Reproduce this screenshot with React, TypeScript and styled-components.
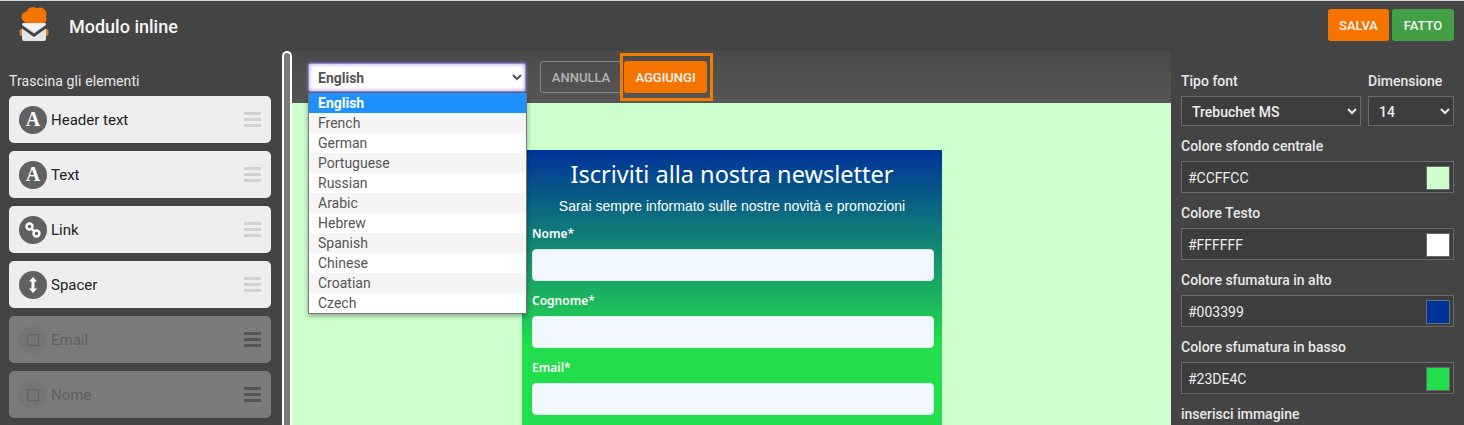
import React from 'react';
import styled, { createGlobalStyle } from 'styled-components';
import { FaRegSquare } from 'react-icons/fa';

const GlobalStyle = createGlobalStyle`
  html, body {
    margin: 0;
    height: 100%;
    overflow: hidden;
    background: #444444;
    font-family: Roboto, "Liberation Sans", sans-serif;
  }
  * {
    box-sizing: border-box;
  }
`;

const Page = styled.div`
  width: 1464px;
  height: 425px;
  overflow: hidden;
  display: flex;
  flex-direction: column;
  background: #444444;
  border-top: 1px solid #d8d8d8;
`;

const Header = styled.header`
  height: 50px;
  flex: none;
  display: flex;
  align-items: center;
  padding: 0 10px 0 19px;
`;

const Logo = styled.svg`
  width: 30px;
  height: 36px;
  margin-top: -6px;
`;

const Title = styled.h1`
  margin: 0 0 0 20px;
  font-size: 18px;
  font-weight: 500;
  color: #f5f5f5;
  flex: 1;
`;

const HeaderButton = styled.button<{ $bg: string; $w: number }>`
  width: ${p => p.$w}px;
  height: 32px;
  margin: -2px 0 0 3px;
  padding: 0;
  border: 0;
  border-radius: 3px;
  background: ${p => p.$bg};
  color: #f4f4f4;
  font: 500 13px Roboto, sans-serif;
`;

const Body = styled.div`
  flex: 1;
  display: flex;
  min-height: 0;
`;

const Sidebar = styled.aside`
  width: 282px;
  flex: none;
  padding: 21px 10px 0 9px;
`;

const SideTitle = styled.div`
  font-size: 14px;
  letter-spacing: 0.1px;
  line-height: 18px;
  color: #e8e8e8;
  margin-bottom: 6px;
`;

const ItemList = styled.div`
  display: flex;
  flex-direction: column;
  gap: 8px;
`;

const Item = styled.div<{ $off?: boolean }>`
  height: 47px;
  width: 262px;
  display: flex;
  align-items: center;
  padding: 0 10px;
  border-radius: 5px;
  background: ${p => (p.$off ? '#7b7b7b' : '#eeeeee')};
  color: ${p => (p.$off ? '#5f5f5f' : '#222222')};
  font-size: 15px;
`;

const ItemIcon = styled.span<{ $off?: boolean }>`
  width: 28px;
  height: 28px;
  border-radius: 50%;
  flex: none;
  margin-right: 4px;
  display: flex;
  align-items: center;
  justify-content: center;
  background: ${p => (p.$off ? '#757575' : '#616161')};
  color: ${p => (p.$off ? '#636363' : '#ffffff')};
  font: bold 20px "Liberation Serif", serif;
`;

const ItemLabel = styled.span`
  flex: 1;
`;

const Handle = styled.span<{ $off?: boolean }>`
  width: 17px;
  height: 15px;
  flex: none;
  display: flex;
  flex-direction: column;
  justify-content: space-between;
  & > i {
    display: block;
    height: 3px;
    background: ${p => (p.$off ? '#565656' : '#d2d2d2')};
  }
`;

const ScrollThumb = styled.div`
  width: 10px;
  flex: none;
  border: 2px solid #ffffff;
  border-bottom: 0;
  border-radius: 5px 5px 0 0;
  background: #7b7b7b;
`;

const Center = styled.main`
  flex: 1;
  min-width: 0;
  display: flex;
  flex-direction: column;
`;

const Toolbar = styled.div`
  position: relative;
  height: 52px;
  flex: none;
  display: flex;
  align-items: flex-start;
  padding: 2px 0 0 16px;
  background: linear-gradient(#4a4a4a, #565656);
`;

const LangSelect = styled.select`
  width: 218px;
  height: 29px;
  margin-top: 10px;
  padding: 0 5px;
  border: 1px solid #8f88c8;
  border-radius: 3px;
  box-shadow: inset 0 0 4px #a99cf0, 0 0 3px #8f7fe0;
  outline: none;
  background: #ffffff;
  color: #555555;
  font: 700 14px Roboto, sans-serif;
`;

const Dropdown = styled.ul`
  position: absolute;
  left: 16px;
  top: 42px;
  z-index: 5;
  width: 219px;
  margin: 0;
  padding: 0;
  list-style: none;
  background: #ffffff;
  border: 1px solid #777777;
  border-top: 0;
  box-shadow: 0 2px 5px rgba(0, 0, 0, 0.35);
`;

const Option = styled.li<{ $active?: boolean }>`
  height: 20px;
  line-height: 20px;
  padding-left: 9px;
  font-size: 14px;
  font-weight: ${p => (p.$active ? 700 : 400)};
  color: ${p => (p.$active ? '#ffffff' : '#555555')};
  background: ${p => (p.$active ? '#1e90ff' : 'transparent')};
  &:nth-child(even) {
    background: #f5f5f5;
  }
`;

const CancelButton = styled.button`
  width: 82px;
  height: 32px;
  margin: 8px 0 0 14px;
  padding: 0;
  border: 1px solid #8a8a8a;
  border-radius: 3px;
  background: transparent;
  color: #b4b4b4;
  font: 500 13px Roboto, sans-serif;
`;

const AddFrame = styled.div`
  width: 93px;
  height: 48px;
  margin-left: -2px;
  padding: 5px 3px 0 1px;
  border: 3px solid #f57c00;
`;

const AddButton = styled.button`
  width: 83px;
  height: 32px;
  padding: 0;
  border: 0;
  border-radius: 3px;
  background: #f57400;
  color: #f5f5f5;
  font: 500 13px Roboto, sans-serif;
`;

const Canvas = styled.div`
  flex: 1;
  min-height: 0;
  overflow: hidden;
  padding: 47px 0 0 230px;
  background: #ccffcc;
`;

const Form = styled.div`
  width: 420px;
  height: 400px;
  padding: 0 10px;
  background: linear-gradient(#003399 0, #23de4c 195px);
  color: #ffffff;
`;

const FormTitle = styled.h2`
  margin: 0;
  padding-top: 9px;
  text-align: center;
  font: 400 23.5px/30px "Noto Sans", sans-serif;
`;

const FormSub = styled.p`
  margin: 9px 0 0;
  text-align: center;
  font: 14px/16px "Liberation Sans", sans-serif;
`;

const FieldLabel = styled.label`
  display: block;
  margin: 11px 0 6px;
  font: 600 12px/18px "Noto Sans", sans-serif;
`;

const FieldInput = styled.input`
  display: block;
  width: 402px;
  height: 32px;
  border: 1px solid #dfe6ec;
  border-radius: 4px;
  background: #f0f7fe;
  outline: none;
`;

const Panel = styled.aside`
  width: 293px;
  flex: none;
  padding: 21px 10px 0;
  color: #e8e8e8;
  font-size: 14px;
`;

const FontRow = styled.div`
  display: grid;
  grid-template-columns: 180px 86px;
  column-gap: 7px;
`;

const PanelLabel = styled.div`
  line-height: 18px;
  margin-bottom: 6px;
  font-weight: 500;
`;

const PanelSelect = styled.select`
  width: 100%;
  height: 30px;
  padding: 2px 6px 0;
  border: 1px solid #6a6a6a;
  background: #3d3d3d;
  color: #eeeeee;
  font: 500 14px Roboto, sans-serif;
  outline: none;
`;

const ColorBlock = styled.div`
  margin-top: 11px;
`;

const ColorField = styled.div`
  width: 273px;
  height: 32px;
  display: flex;
  align-items: center;
  justify-content: space-between;
  padding: 1px 3px 0 6px;
  border: 1px solid #6a6a6a;
  background: #3d3d3d;
  color: #eeeeee;
`;

const Swatch = styled.span<{ $color: string }>`
  width: 24px;
  height: 24px;
  border: 1px solid #6a6a6a;
  background: ${p => p.$color};
`;

const languages = ['English', 'French', 'German', 'Portuguese', 'Russian', 'Arabic', 'Hebrew', 'Spanish', 'Chinese', 'Croatian', 'Czech'];

const colors = [
  { label: 'Colore sfondo centrale', value: '#CCFFCC' },
  { label: 'Colore Testo', value: '#FFFFFF' },
  { label: 'Colore sfumatura in alto', value: '#003399' },
  { label: 'Colore sfumatura in basso', value: '#23DE4C' },
];

const ChainIcon = () => (
  <svg width="18" height="18" viewBox="0 0 18 18" fill="none" stroke="#ffffff" strokeWidth="2.4">
    <circle cx="5.5" cy="5.5" r="3" />
    <circle cx="12.5" cy="12.5" r="3" />
    <path d="M7.5 7.5 L10.5 10.5" />
  </svg>
);

const SpacerIcon = () => (
  <svg width="10" height="16" viewBox="0 0 10 16" fill="#ffffff">
    <path d="M5 0 L9 4.5 H6.5 V11.5 H9 L5 16 L1 11.5 H3.5 V4.5 H1 Z" />
  </svg>
);

const items = [
  { label: 'Header text', icon: 'A' as React.ReactNode },
  { label: 'Text', icon: 'A' as React.ReactNode },
  { label: 'Link', icon: <ChainIcon /> },
  { label: 'Spacer', icon: <SpacerIcon /> },
  { label: 'Email', icon: <FaRegSquare size={14} />, off: true },
  { label: 'Nome', icon: <FaRegSquare size={14} />, off: true },
];

const App = () => (
  <Page>
    <GlobalStyle />
    <Header>
      <Logo viewBox="0 0 30 36">
        <g fill="#f57400">
          <circle cx="8" cy="12" r="5.5" />
          <circle cx="14" cy="9" r="7" />
          <circle cx="21" cy="9" r="6.5" />
          <circle cx="23" cy="14" r="4.5" />
          <rect x="7" y="12" width="16" height="8" />
        </g>
        <rect x="0.5" y="24" width="4" height="7" rx="2" fill="#d9822b" />
        <rect x="25.5" y="24" width="4" height="7" rx="2" fill="#d9822b" />
        <rect x="3" y="18" width="24" height="18" rx="2" fill="#e6e6e6" />
        <path d="M3 18.5 H27 L15 27 Z" fill="#f4f4f4" />
        <path d="M3 20 L15 28.5 L27 20 V23.5 L15 32 L3 23.5 Z" fill="#444444" />
      </Logo>
      <Title>Modulo inline</Title>
      <HeaderButton $bg="#f57400" $w={61}>SALVA</HeaderButton>
      <HeaderButton $bg="#43a047" $w={62}>FATTO</HeaderButton>
    </Header>
    <Body>
      <Sidebar>
        <SideTitle>Trascina gli elementi</SideTitle>
        <ItemList>
          {items.map(item => (
            <Item key={item.label} $off={item.off}>
              <ItemIcon $off={item.off}>{item.icon}</ItemIcon>
              <ItemLabel>{item.label}</ItemLabel>
              <Handle $off={item.off}>
                <i />
                <i />
                <i />
              </Handle>
            </Item>
          ))}
        </ItemList>
      </Sidebar>
      <ScrollThumb />
      <Center>
        <Toolbar>
          <LangSelect defaultValue="English">
            {languages.map(lang => (
              <option key={lang}>{lang}</option>
            ))}
          </LangSelect>
          <Dropdown>
            {languages.map((lang, i) => (
              <Option key={lang} $active={i === 0}>
                {lang}
              </Option>
            ))}
          </Dropdown>
          <CancelButton>ANNULLA</CancelButton>
          <AddFrame>
            <AddButton>AGGIUNGI</AddButton>
          </AddFrame>
        </Toolbar>
        <Canvas>
          <Form>
            <FormTitle>Iscriviti alla nostra newsletter</FormTitle>
            <FormSub>Sarai sempre informato sulle nostre novità e promozioni</FormSub>
            <FieldLabel>Nome*</FieldLabel>
            <FieldInput />
            <FieldLabel>Cognome*</FieldLabel>
            <FieldInput />
            <FieldLabel>Email*</FieldLabel>
            <FieldInput />
          </Form>
        </Canvas>
      </Center>
      <Panel>
        <FontRow>
          <PanelLabel>Tipo font</PanelLabel>
          <PanelLabel>Dimensione</PanelLabel>
          <PanelSelect defaultValue="Trebuchet MS">
            <option>Trebuchet MS</option>
          </PanelSelect>
          <PanelSelect defaultValue="14">
            <option>14</option>
          </PanelSelect>
        </FontRow>
        {colors.map(color => (
          <ColorBlock key={color.label}>
            <PanelLabel>{color.label}</PanelLabel>
            <ColorField>
              {color.value}
              <Swatch $color={color.value} />
            </ColorField>
          </ColorBlock>
        ))}
        <ColorBlock>
          <PanelLabel>inserisci immagine</PanelLabel>
        </ColorBlock>
      </Panel>
    </Body>
  </Page>
);

export default App;
